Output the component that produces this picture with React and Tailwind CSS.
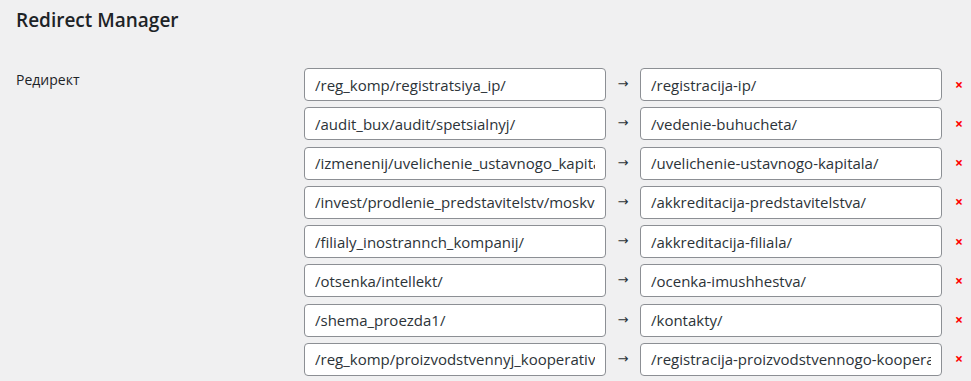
const rows = [
  ['/reg_komp/registratsiya_ip/', '/registracija-ip/'],
  ['/audit_bux/audit/spetsialnyj/', '/vedenie-buhucheta/'],
  ['/izmenenij/uvelichenie_ustavnogo_kapitala/', '/uvelichenie-ustavnogo-kapitala/'],
  ['/invest/prodlenie_predstavitelstv/moskva/', '/akkreditacija-predstavitelstva/'],
  ['/filialy_inostrannch_kompanij/', '/akkreditacija-filiala/'],
  ['/otsenka/intellekt/', '/ocenka-imushhestva/'],
  ['/shema_proezda1/', '/kontakty/'],
  ['/reg_komp/proizvodstvennyj_kooperativ/', '/registracija-proizvodstvennogo-kooperativa/'],
];

const inputCls =
  'w-[302px] h-[33px] px-[10px] bg-white border border-[#8c8f94] rounded-[4px] text-[15px] text-[#2c3338] outline-none';

export default function App() {
  return (
    <div
      className="min-h-screen bg-[#f0f0f1] px-4 text-[#1d2327]"
      style={{ fontFamily: '"Open Sans", "Noto Sans", sans-serif' }}
    >
      <h2 className="pt-[8px] text-[19px] font-semibold leading-[24px] text-[#1d2327]">
        Redirect Manager
      </h2>

      <div className="mt-[36px] flex">
        <div className="w-[288px] shrink-0 pt-[2px] text-[14px] leading-[20px]">Редирект</div>

        <div className="flex flex-col gap-[6.25px]">
          {rows.map(([from, to], i) => (
            <div key={i} className="flex items-center">
              <input readOnly value={from} className={inputCls} style={{ fontFamily: 'inherit' }} />
              <span className="flex w-[34px] justify-center text-[#2c3338]">
                <span className="relative -top-[1px] text-[13px] leading-none" style={{ fontFamily: '"DejaVu Sans", sans-serif' }}>→</span>
              </span>
              <input readOnly value={to} className={inputCls} style={{ fontFamily: 'inherit' }} />
              <span className="ml-[13px] text-[14px] font-bold leading-none text-[#ff0000]">×</span>
            </div>
          ))}
        </div>
      </div>
    </div>
  );
}
